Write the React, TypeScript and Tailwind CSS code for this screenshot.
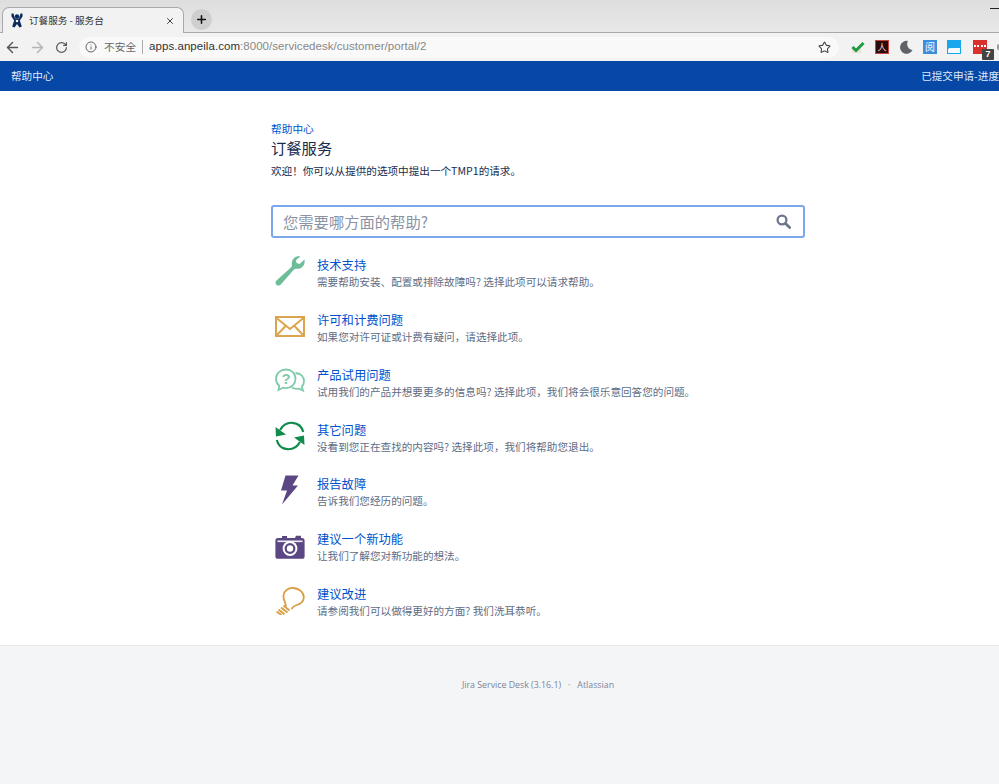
import React from "react";
import { ArrowLeft, ArrowRight, RotateCw, Info, Star, X, Plus } from "lucide-react";

const items = [
  { t: "技术支持", d: "需要帮助安装、配置或排除故障吗? 选择此项可以请求帮助。", i: "wrench" },
  { t: "许可和计费问题", d: "如果您对许可证或计费有疑问\uFF0C请选择此项。", i: "mail" },
  { t: "产品试用问题", d: "试用我们的产品并想要更多的信息吗? 选择此项\uFF0C我们将会很乐意回答您的问题。", i: "chat" },
  { t: "其它问题", d: "没看到您正在查找的内容吗? 选择此项\uFF0C我们将帮助您退出。", i: "sync" },
  { t: "报告故障", d: "告诉我们您经历的问题。", i: "bolt" },
  { t: "建议一个新功能", d: "让我们了解您对新功能的想法。", i: "camera" },
  { t: "建议改进", d: "请参阅我们可以做得更好的方面? 我们洗耳恭听。", i: "bulb" },
];

function RowIcon({ kind }: { kind: string }) {
  const base = { width: 30, height: 30, viewBox: "0 0 30 30" };
  if (kind === "wrench")
    return (
      <svg {...base}>
        <path d="M29.5 3.5 L24.5 8 L21.5 7 L21 4 L25.5 0.5 C21 -0.5 16.5 2.5 16.8 8 C16.9 9.5 17 10.5 16.2 11.3 L1.5 24.5 C-0.5 26.5 0.8 29.8 3.6 29.6 C4.6 29.5 5.3 29 6 28.2 L19 13.5 C20 12.5 21 12.7 22.5 12.8 C27 13 30.5 8.5 29.5 3.5 Z" fill="#6dbd98" />
      </svg>
    );
  if (kind === "mail")
    return (
      <svg {...base}>
        <rect x="1" y="6" width="28" height="19" fill="none" stroke="#dba44e" strokeWidth="2" />
        <path d="M1.5 7 L15 18 L28.5 7 M1.5 24.5 L11 14.5 M28.5 24.5 L19 14.5" fill="none" stroke="#dba44e" strokeWidth="2" />
      </svg>
    );
  if (kind === "chat")
    return (
      <svg {...base}>
        <path d="M11 3.5 C5.5 3.5 1 7.2 1 12.8 C1 15.8 2.2 18.2 4.2 19.8 L3.5 24 L8 21.7 C9 22 10 22.1 11 22.1 C16.5 22.1 20.5 18.2 20.5 12.8 C20.5 7.2 16.5 3.5 11 3.5 Z" fill="none" stroke="#7fcba9" strokeWidth="1.8" />
        <path d="M20.5 7 C25.5 7.3 29 10.5 29 15 C29 17.5 28 19.5 26.8 20.7 L28 24.5 L23.5 22.5 C21.5 23.1 19 22.9 16.8 21.5" fill="none" stroke="#7fcba9" strokeWidth="1.8" />
        <text x="11" y="18" textAnchor="middle" fontSize="15" fontWeight="700" fill="#7fcba9" fontFamily="'Liberation Sans', sans-serif">?</text>
      </svg>
    );
  if (kind === "sync")
    return (
      <svg {...base}>
        <path d="M5 9 C8 3.5 13 1.5 17.5 1.8 C23 2.2 27 6 28.2 11" fill="none" stroke="#0f8b4c" strokeWidth="2.2" />
        <path d="M0.5 6 L1 15.5 L11 13.5 Z" fill="#0f8b4c" />
        <path d="M25 21 C22 26.5 17 28.5 12.5 28.2 C7 27.8 3 24 1.8 19" fill="none" stroke="#0f8b4c" strokeWidth="2.2" />
        <path d="M29.5 24 L29 14.5 L19 16.5 Z" fill="#0f8b4c" />
      </svg>
    );
  if (kind === "bolt")
    return (
      <svg {...base}>
        <path d="M10.5 0.5 L23.5 0.5 L17.5 10.5 L23 10.5 L7 29.5 L12 15.5 L6 15.5 Z" fill="#5c4785" />
      </svg>
    );
  if (kind === "camera")
    return (
      <svg {...base}>
        <path d="M3 8 H7 V6 H12 V8 H20 L21 5.8 H26 V8 H27 C28.7 8 29.6 9 29.6 10.5 V26.5 C29.6 28 28.7 28.8 27 28.8 H3 C1.3 28.8 0.4 28 0.4 26.5 V10.5 C0.4 9 1.3 8 3 8 Z" fill="#5c4785" />
        <rect x="2.5" y="10.5" width="25" height="1.6" fill="#fff" opacity="0.9" />
        <circle cx="15" cy="18.5" r="7.4" fill="#fff" />
        <circle cx="15" cy="18.5" r="5.4" fill="#5c4785" />
        <circle cx="15" cy="18.5" r="3.2" fill="#fff" />
      </svg>
    );
  return (
    <svg {...base}>
      <path d="M11 21.5 C11 17.5 8 15.5 8.5 10.5 C9 5.5 13.5 2.5 18.5 3 C24.5 3.5 29 7.5 28.8 12.5 C28.6 17.5 24.5 19.5 20.5 20.5 C18.5 21 17.5 22.5 16.5 24" fill="none" stroke="#d99f44" strokeWidth="1.8" />
      <path d="M8.5 20.5 L14.5 25.5 M6 22.5 L12.5 27.5 M3.5 24.5 L9.5 29.3 M1.5 26.5 L6.5 30" fill="none" stroke="#d99f44" strokeWidth="1.9" />
    </svg>
  );
}

export default function App() {
  return (
    <div className="flex h-[784px] w-[999px] flex-col overflow-hidden bg-white font-['Noto_Sans_CJK_SC','Microsoft_YaHei',sans-serif]">
      {/* tab strip */}
      <div className="relative flex h-[33px] shrink-0 items-end border-b border-[#a9a9a9] bg-gradient-to-b from-[#dedede] to-[#e8e8e8] pl-[2px]">
        <div className="-mb-px flex h-[26px] w-[182px] items-center rounded-t-[7px] border border-b-0 border-[#a9a9a9] bg-[#f2f2f2] pl-[8px] pr-[8px]">
          <svg width="12" height="15" viewBox="0 0 12 15">
            <circle cx="6" cy="3.5" r="2.2" fill="#0b2a5b" />
            <path d="M0.5 0.5 L2.5 0.5 L4 5.5 L8 5.5 L9.5 0.5 L11.5 0.5 L11.5 3.5 L8.8 7.5 L10.8 13.5 L8.5 14.5 L6 11 L3.5 14.5 L1.2 13.5 L3.2 7.5 L0.5 3.5 Z" fill="#0b2a5b" />
            <circle cx="6" cy="8" r="1.3" fill="#f2f2f2" />
          </svg>
          <span className="ml-[6px] flex-1 text-[9.6px] leading-none text-[#333]">订餐服务 - 服务台</span>
          <X size={10} strokeWidth={2.4} color="#444" />
        </div>
        <div className="mb-[2px] ml-[7px] flex h-[21px] w-[21px] items-center justify-center rounded-full bg-[#cfcfcf]">
          <Plus size={13} strokeWidth={2.8} color="#111" />
        </div>
        <div className="absolute right-0 top-[8px] h-[1px] w-[9px] bg-[#222]" />
      </div>
      {/* toolbar */}
      <div className="relative flex h-[28px] shrink-0 items-center bg-[#f2f2f2] pl-[4px]">
        <ArrowLeft size={17} strokeWidth={2} color="#555" />
        <ArrowRight size={17} strokeWidth={2} color="#b4b4b4" className="ml-[8px]" />
        <RotateCw size={13} strokeWidth={2.2} color="#555" className="ml-[9px]" />
        <div className="ml-[11px] flex h-[21px] w-[760px] items-center rounded-full bg-[#f9f9f9] pl-[6px] pr-[7px]">
          <Info size={12} strokeWidth={1.8} color="#555" />
          <span className="ml-[7px] text-[10.7px] leading-none text-[#666]">不安全</span>
          <span className="ml-[6px] mr-[6px] h-[14px] w-px bg-[#aaa]" />
          <span className="font-['Liberation_Sans',sans-serif] text-[11.5px] leading-none tracking-[0.05px] text-[#333]">
            apps.anpeila.com<span className="text-[#888]">:8000/servicedesk/customer/portal/2</span>
          </span>
          <Star size={13} strokeWidth={2} color="#444" className="ml-auto mr-[1px]" />
        </div>
        <div className="ml-[12px] flex items-center gap-[10px]">
          <svg width="14" height="14" viewBox="0 0 14 14"><rect x="1" y="8" width="9" height="5" fill="#e6e2d6" /><path d="M1.5 7 L5 10.5 L12.5 3" fill="none" stroke="#1a9c3e" strokeWidth="3" /></svg>
          <div className="flex h-[14px] w-[14px] items-center justify-center border border-[#c9463d] bg-[#2a0c0c] text-[9px] leading-none text-[#f0d0d0]">人</div>
          <svg width="14" height="14" viewBox="0 0 14 14"><path d="M9 1 A6.5 6.5 0 1 0 13.5 10 A6 6 0 0 1 9 1 Z" fill="#5f6368" /></svg>
          <div className="flex h-[14px] w-[14px] items-center justify-center bg-[#3b8ede] text-[10px] leading-none text-white">阅</div>
          <div className="relative h-[14px] w-[14px] bg-[#19a7ec]"><div className="absolute bottom-[1px] left-[1px] h-[5px] w-[12px] rounded-tl-[2px] bg-[#f4fbff]" /></div>
          <div className="relative ml-[2px] h-[14px] w-[14px] bg-[#d9302c]">
            <div className="absolute left-[1px] top-[5px] h-[2px] w-[12px] border-t-2 border-dotted border-white" />
            <div className="absolute -bottom-[6px] -right-[7px] flex h-[11px] w-[12px] items-center justify-center rounded-[1px] bg-[#444] font-['Liberation_Sans',sans-serif] text-[9px] font-bold leading-none text-white">7</div>
          </div>
        </div>
        <div className="absolute right-0 top-[11px] h-[6px] w-[2px] rounded-l-full bg-[#9a9a9a]" />
      </div>
      {/* nav */}
      <div className="flex h-[30px] shrink-0 items-center justify-between overflow-hidden whitespace-nowrap bg-[#0747a6] pl-[11px] text-[10.6px] leading-none text-[#deebff]">
        <span>帮助中心</span>
        <span>已提交申请-进度</span>
      </div>
      {/* main */}
      <div className="h-[555px] shrink-0 border-b border-[#e6e8ec] pl-[271px]">
        <div className="w-[534px]">
          <div className="mt-[31px] text-[10.7px] leading-[14px] text-[#0052cc]">帮助中心</div>
          <div className="text-[15.3px] leading-[22px] text-[#172b4d]">订餐服务</div>
          <div className="mt-[6px] text-[10.6px] leading-[14px] text-[#172b4d]">欢迎{"\uFF01"}你可以从提供的选项中提出一个TMP1的请求。</div>
          <div className="mt-[27px] flex h-[33px] items-center justify-between rounded-[3px] border-2 border-[#7ba7ec] bg-white pl-[10px] pr-[12px]">
            <span className="pt-[1px] text-[15.3px] leading-none text-[#8993a4]">您需要哪方面的帮助?</span>
            <svg width="15" height="15" viewBox="0 0 15 15">
              <circle cx="6" cy="6" r="4.4" fill="none" stroke="#6b778c" strokeWidth="2.3" />
              <path d="M9.5 9.5 L13.6 13.6" stroke="#6b778c" strokeWidth="2.8" strokeLinecap="round" />
            </svg>
          </div>
          <div className="mt-[18px] flex flex-col">
            {items.map((it) => (
              <div key={it.t} className="flex h-[54.85px] items-start">
                <div className="ml-[4px] w-[42px] shrink-0"><RowIcon kind={it.i} /></div>
                <div className="pt-[1px]">
                  <div className="text-[12.3px] leading-[17px] text-[#0052cc]">{it.t}</div>
                  <div className="whitespace-nowrap text-[10.6px] leading-[15px] text-[#5e6c84]">{it.d}</div>
                </div>
              </div>
            ))}
          </div>
        </div>
      </div>
      {/* footer */}
      <div className="flex-1 bg-[#f4f5f7] pt-[33px]">
        <div className="flex justify-center pl-[77px] font-['Open_Sans','Noto_Sans',sans-serif] text-[8.8px] leading-[12px] text-[#7a869a]">
          <span>Jira Service Desk (3.16.1)</span>
          <span className="mx-[7px]">·</span>
          <span>Atlassian</span>
        </div>
      </div>
    </div>
  );
}
